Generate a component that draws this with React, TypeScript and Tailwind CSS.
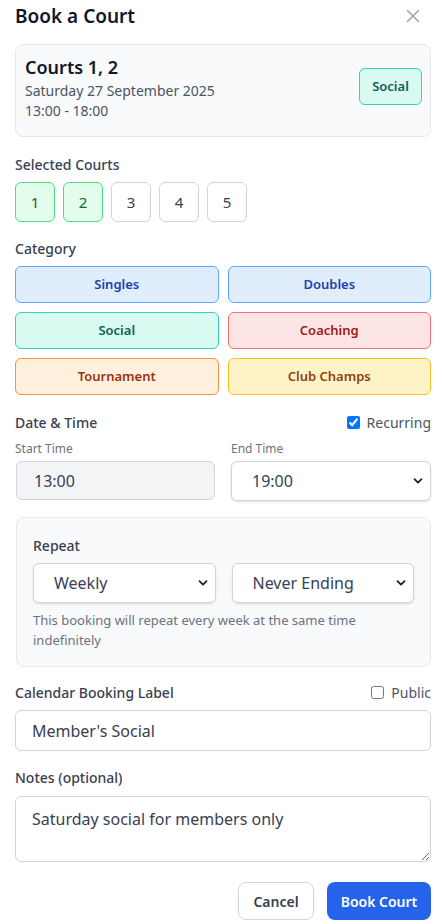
import { X } from 'lucide-react'

const courts = [
  { n: 1, on: true },
  { n: 2, on: true },
  { n: 3, on: false },
  { n: 4, on: false },
  { n: 5, on: false },
]

const categories = [
  { label: 'Singles', cls: 'bg-[#e0edfd] border-[#60a5fa] text-[#1e40af]' },
  { label: 'Doubles', cls: 'bg-[#e0edfd] border-[#60a5fa] text-[#1e40af]' },
  { label: 'Social', cls: 'bg-[#d8faf1] border-[#2dd4bf] text-[#115e59]' },
  { label: 'Coaching', cls: 'bg-[#fde5e5] border-[#f87171] text-[#991b1b]' },
  { label: 'Tournament', cls: 'bg-[#ffefdd] border-[#fb923c] text-[#9a3412]' },
  { label: 'Club Champs', cls: 'bg-[#fef3c7] border-[#fbbf24] text-[#92400e]' },
]

function Chevron() {
  return (
    <svg width="12" height="12" viewBox="0 0 12 12" className="absolute right-[6px] top-1/2 -translate-y-1/2 text-[#222]">
      <path d="M2.5 4.2 6 7.7 9.5 4.2" fill="none" stroke="currentColor" strokeWidth="1.8" strokeLinecap="round" strokeLinejoin="round" />
    </svg>
  )
}

function Select({ value }: { value: string }) {
  return (
    <div className="relative flex h-10 items-center rounded-md border border-[#d1d5db] bg-white pl-[20px] text-[16px] text-[#374151] shadow-sm">
      {value}
      <Chevron />
    </div>
  )
}

export default function App() {
  return (
    <div className="w-[445px] bg-white pb-[5px] pl-[15px] pr-[14px] font-['Noto_Sans',sans-serif] text-[#1f2937]">
      {/* Header */}
      <div className="flex h-[32px] items-center justify-between">
        <h2 className="text-[19px] font-semibold text-[#111827]">Book a Court</h2>
        <X className="mr-[7px] h-[22px] w-[22px] text-[#9ca3af]" strokeWidth={1.6} />
      </div>

      {/* Summary */}
      <div className="mt-[12px] flex h-[93px] items-start justify-between rounded-lg border border-[#e5e7eb] bg-[#f9fafb] pl-[9px] pr-[8px] pt-[8px]">
        <div className="flex flex-col">
          <div className="text-[18px] font-semibold leading-[28px] text-[#111827]">Courts 1, 2</div>
          <div className="text-[14px] leading-[20px] text-[#4b5563]">Saturday 27 September 2025</div>
          <div className="text-[14px] leading-[20px] text-[#4b5563]">13:00 - 18:00</div>
        </div>
        <div className="mt-[15px] flex h-[37px] w-[63px] items-center justify-center rounded-md border border-[#2dd4bf] bg-[#d8faf1] text-[13px] font-semibold text-[#115e59]">
          Social
        </div>
      </div>

      {/* Courts */}
      <div className="mt-[17px] text-[14px] font-medium text-[#374151]">Selected Courts</div>
      <div className="mt-[7px] flex gap-2">
        {courts.map((c) => (
          <div
            key={c.n}
            className={
              c.on
                ? 'flex h-10 w-10 items-center justify-center rounded-md border border-[#4ade80] bg-[#e3fcec] text-[15px] text-[#166534]'
                : 'flex h-10 w-10 items-center justify-center rounded-md border border-[#d1d5db] bg-white text-[15px] text-[#374151]'
            }
          >
            {c.n}
          </div>
        ))}
      </div>

      {/* Category */}
      <div className="mt-[16px] text-[14px] font-medium text-[#374151]">Category</div>
      <div className="mt-[7px] grid grid-cols-2 gap-x-[9px] gap-y-[9px]">
        {categories.map((c) => (
          <div key={c.label} className={`flex h-[37px] items-center justify-center rounded-md border text-[13px] font-semibold ${c.cls}`}>
            {c.label}
          </div>
        ))}
      </div>

      {/* Date & Time */}
      <div className="mt-[17px] flex items-center justify-between">
        <span className="text-[14px] font-medium text-[#374151]">Date &amp; Time</span>
        <label className="flex items-center gap-[7px] text-[14px] text-[#4b5563]">
          <input type="checkbox" defaultChecked className="h-[13px] w-[13px] accent-[#0075ff]" />
          Recurring
        </label>
      </div>
      <div className="mt-[7px] grid grid-cols-2 gap-x-[16px]">
        <div>
          <div className="text-[12px] text-[#6b7280]">Start Time</div>
          <div className="mt-[3px] ml-[1px] flex h-[39px] items-center rounded-md border border-[#d1d5db] bg-[#f3f4f6] pl-[17px] text-[16px] text-[#374151]">
            13:00
          </div>
        </div>
        <div>
          <div className="text-[12px] text-[#6b7280]">End Time</div>
          <div className="mt-[3px]">
            <Select value="19:00" />
          </div>
        </div>
      </div>

      {/* Repeat */}
      <div className="ml-[1px] mt-[16px] rounded-lg border border-[#e5e7eb] bg-[#f9fafb] px-[16px] pb-[16px] pt-[17px]">
        <div className="text-[14px] font-medium text-[#374151]">Repeat</div>
        <div className="mt-[7px] grid grid-cols-2 gap-x-[16px]">
          <Select value="Weekly" />
          <Select value="Never Ending" />
        </div>
        <p className="mt-[7px] text-[13px] leading-[20px] text-[#6b7280]">
          This booking will repeat every week at the same time indefinitely
        </p>
      </div>

      {/* Label */}
      <div className="mt-[15px] flex items-center justify-between">
        <span className="text-[14px] font-medium text-[#374151]">Calendar Booking Label</span>
        <label className="flex items-center gap-[7px] text-[14px] text-[#4b5563]">
          <input type="checkbox" className="h-[13px] w-[13px]" />
          Public
        </label>
      </div>
      <div className="mt-[7px] flex h-[41px] items-center rounded-md border border-[#d1d5db] bg-white pl-[16px] text-[16px] text-[#374151]">
        Member's Social
      </div>

      {/* Notes */}
      <div className="mt-[16px] text-[14px] font-medium text-[#374151]">Notes (optional)</div>
      <textarea
        readOnly
        defaultValue="Saturday social for members only"
        className="mt-[8px] block h-[66px] w-full rounded-md border border-[#d1d5db] bg-white px-[16px] pt-[10px] text-[16px] text-[#374151] outline-none"
      />

      {/* Actions */}
      <div className="mt-[20px] flex justify-end gap-[13px]">
        <button className="h-[38px] w-[76px] rounded-lg border border-[#d1d5db] bg-white text-[14px] font-semibold text-[#374151]">
          Cancel
        </button>
        <button className="h-[38px] w-[104px] rounded-lg bg-[#2563eb] text-[14px] font-semibold text-white">
          Book Court
        </button>
      </div>
    </div>
  )
}
